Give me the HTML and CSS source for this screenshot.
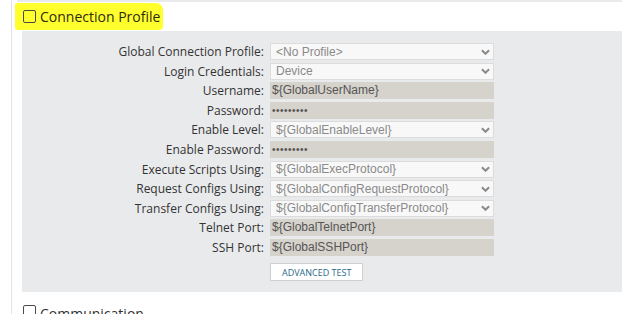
FILE: index.html
```html
<!DOCTYPE html>
<html lang="en">
<head>
    <meta charset="UTF-8">
    <title>Device Settings</title>
    <link rel="stylesheet" href="styles.css">
</head>
<body>
    <div class="page">
        <div class="prev-box"></div>

        <div class="section-title">
            <span class="highlight">
                <span class="check"></span>
                <span class="title-text">Connection Profile</span>
            </span>
        </div>

        <div class="panel">
            <div class="form-grid">
                <label>Global Connection Profile:</label>
                <div class="select"><span>&lt;No Profile&gt;</span><svg viewBox="0 0 10 6"><path d="M1 1 L5 5 L9 1" /></svg></div>

                <label>Login Credentials:</label>
                <div class="select"><span>Device</span><svg viewBox="0 0 10 6"><path d="M1 1 L5 5 L9 1" /></svg></div>

                <label>Username:</label>
                <div class="readonly">${GlobalUserName}</div>

                <label>Password:</label>
                <div class="readonly dots">&bull;&bull;&bull;&bull;&bull;&bull;&bull;&bull;&bull;</div>

                <label>Enable Level:</label>
                <div class="select"><span>${GlobalEnableLevel}</span><svg viewBox="0 0 10 6"><path d="M1 1 L5 5 L9 1" /></svg></div>

                <label>Enable Password:</label>
                <div class="readonly dots">&bull;&bull;&bull;&bull;&bull;&bull;&bull;&bull;&bull;</div>

                <label>Execute Scripts Using:</label>
                <div class="select"><span>${GlobalExecProtocol}</span><svg viewBox="0 0 10 6"><path d="M1 1 L5 5 L9 1" /></svg></div>

                <label>Request Configs Using:</label>
                <div class="select"><span>${GlobalConfigRequestProtocol}</span><svg viewBox="0 0 10 6"><path d="M1 1 L5 5 L9 1" /></svg></div>

                <label>Transfer Configs Using:</label>
                <div class="select"><span>${GlobalConfigTransferProtocol}</span><svg viewBox="0 0 10 6"><path d="M1 1 L5 5 L9 1" /></svg></div>

                <label>Telnet Port:</label>
                <div class="readonly">${GlobalTelnetPort}</div>

                <label>SSH Port:</label>
                <div class="readonly">${GlobalSSHPort}</div>

                <span></span>
                <div><button class="test-btn">ADVANCED TEST</button></div>
            </div>
        </div>

        <div class="section-title next">
            <span class="check"></span>
            <span class="title-text">Communication</span>
        </div>
    </div>
</body>
</html>
```

FILE: styles.css
```css
body {
    margin: 0;
    background: #FFF;
    font-family: "Open Sans", "Liberation Sans", sans-serif;
    overflow: hidden;
    height: 314px;
}

.page {
    margin-left: 11px;
    border-left: 1px solid #E3E3E3;
    height: 314px;
    overflow: hidden;
    padding-left: 10px;
    padding-right: 1px;
}

.prev-box {
    height: 2px;
    background: #E9EAEC;
    margin-left: -5px;
}

.section-title {
    height: 29px;
    display: flex;
    align-items: center;
}

.highlight {
    display: flex;
    align-items: center;
    background: #FFFF2E;
    margin-left: -7px;
    padding: 5px 3px 5px 8px;
    border-radius: 2px 7px 4px 3px;
}

.check {
    width: 11px;
    height: 11px;
    border: 1px solid #4A4A4A;
    border-radius: 2px;
    background: transparent;
    margin-right: 4px;
}

.title-text {
    font-size: 14px;
    color: #2E2A10;
    line-height: 17px;
}

.panel {
    background: #E9EAEC;
    padding: 12px 0 16px 0;
}

.form-grid {
    display: grid;
    grid-template-columns: 242px 224px;
    grid-auto-rows: 17px;
    column-gap: 6px;
    row-gap: 2.6px;
}

.form-grid label {
    text-align: right;
    font-size: 12px;
    color: #333;
    line-height: 17px;
}

.select {
    display: flex;
    align-items: center;
    justify-content: space-between;
    background: #F8F8F8;
    border: 1px solid #DCDCDC;
    box-sizing: border-box;
    padding: 0 3px 0 5px;
    font-family: "Liberation Sans", Arial, sans-serif;
    font-size: 12px;
    color: #8A8A8A;
}

.select svg {
    width: 9px;
    height: 6px;
    fill: none;
    stroke: #8A8A8A;
    stroke-width: 2.2;
}

.readonly {
    background: #D6D2CC;
    padding: 0 2px;
    font-family: "Liberation Sans", Arial, sans-serif;
    font-size: 12px;
    color: #555;
    line-height: 17px;
}

.dots {
    font-size: 10px;
    letter-spacing: 0.5px;
}

.test-btn {
    height: 18px;
    padding: 0 11px;
    background: #FFF;
    border: 1px solid #CFCFCF;
    font-family: "Open Sans", sans-serif;
    font-size: 9px;
    color: #2B6A8A;
    margin-top: 1px;
}

.next {
    margin-top: 2px;
    height: 30px;
    align-items: flex-start;
    padding-top: 11px;
    padding-left: 1px;
}

.next .title-text {
    color: #333;
}
```
